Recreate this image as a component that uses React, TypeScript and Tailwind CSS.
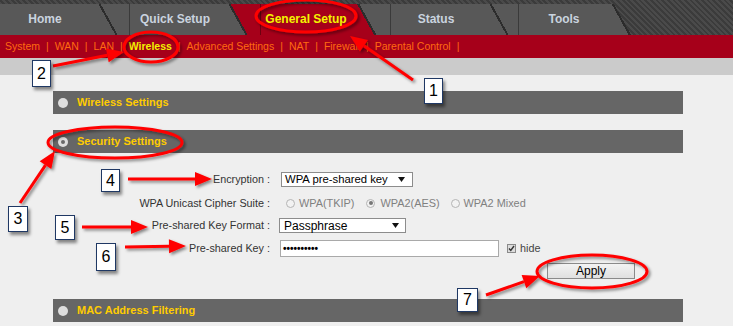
import React from 'react'

// ── Top tabs ───────────────────────────────────────────────────────────────────

const tabs = [
  {
    label: 'Home',
    cell: 'w-[129px] bg-[linear-gradient(61deg,#585858_101px,#2c2c2c_101px,#2c2c2c_103px,#585858_103px)]',
    text: 'text-[#c9d3df]',
  },
  {
    label: 'Quick Setup',
    cell: 'w-[131px] border-l border-[#3a3a3a] bg-[linear-gradient(61deg,#585858_101px,#2c2c2c_101px,#2c2c2c_103px,#a6001a_103px)]',
    text: 'text-[#c9d3df]',
  },
  {
    label: 'General Setup',
    cell: 'w-[130px] border-l border-[#6e0010] bg-[linear-gradient(61deg,#a6001a_99px,#2c2c2c_99px,#2c2c2c_101px,#585858_101px)]',
    text: 'text-[#f4f400]',
  },
  {
    label: 'Status',
    cell: 'w-[128px] border-l border-[#3a3a3a] bg-[linear-gradient(61deg,#585858_101px,#2c2c2c_101px,#2c2c2c_103px,#585858_103px)]',
    text: 'text-[#c9d3df]',
  },
  {
    label: 'Tools',
    cell: 'w-[130px] border-l border-[#3a3a3a] bg-[linear-gradient(61deg,#585858_96px,#2c2c2c_96px,#2c2c2c_98px,transparent_98px)]',
    text: 'text-[#c9d3df]',
  },
]

const navItems = ['System', 'WAN', 'LAN', 'Wireless', 'Advanced Settings', 'NAT', 'Firewall', 'Parental Control']

// ── Small form pieces ──────────────────────────────────────────────────────────

function Caret() {
  return (
    <svg width="7" height="5" viewBox="0 0 7 5" className="shrink-0">
      <path d="M0 0h7L3.5 5z" fill="#111" />
    </svg>
  )
}

function Radio({ checked }: { checked?: boolean }) {
  return (
    <span className="w-[9px] h-[9px] rounded-full border border-[#b4b4b4] bg-[#f2f2f2] flex items-center justify-center shrink-0">
      {checked && <span className="w-[4px] h-[4px] rounded-full bg-[#777]" />}
    </span>
  )
}

function SectionBar({ title, selected }: { title: string; selected?: boolean }) {
  return (
    <div className="h-[23px] w-[630px] bg-[#666666] flex items-center">
      <span className="ml-[5px] w-[10px] h-[10px] rounded-full bg-[#dedede] flex items-center justify-center">
        {selected && <span className="w-[4px] h-[4px] rounded-full bg-[#6a6a6a]" />}
      </span>
      <span className="ml-[9px] text-[11px] font-bold text-[#ffcc00]">{title}</span>
    </div>
  )
}

function Label({ children }: { children: React.ReactNode }) {
  return <span className="w-[217px] shrink-0 text-right text-[10.8px] text-[#333]">{children}</span>
}

// ── Annotation overlay ─────────────────────────────────────────────────────────

const ellipses = [
  { cx: 306, cy: 16, rx: 50, ry: 16 },
  { cx: 151, cy: 47, rx: 27, ry: 15 },
  { cx: 115, cy: 142.5, rx: 67, ry: 15.5 },
  { cx: 592, cy: 271.5, rx: 55, ry: 16.5 },
]

const arrows = [
  { x1: 413, y1: 80, x2: 350, y2: 36 },
  { x1: 53, y1: 66, x2: 124, y2: 52 },
  { x1: 20, y1: 203, x2: 55, y2: 151 },
  { x1: 128, y1: 179, x2: 212, y2: 179 },
  { x1: 82, y1: 227, x2: 148, y2: 227 },
  { x1: 125, y1: 247, x2: 186, y2: 246 },
  { x1: 486, y1: 295, x2: 540, y2: 276 },
]

function Arrow({ x1, y1, x2, y2 }: { x1: number; y1: number; x2: number; y2: number }) {
  const a = Math.atan2(y2 - y1, x2 - x1)
  const len = 17
  const half = 7
  const bx = x2 - len * Math.cos(a)
  const by = y2 - len * Math.sin(a)
  const px = -Math.sin(a) * half
  const py = Math.cos(a) * half
  return (
    <g>
      <line x1={x1} y1={y1} x2={bx} y2={by} stroke="#ff0000" strokeWidth="3" />
      <polygon points={`${x2},${y2} ${bx + px},${by + py} ${bx - px},${by - py}`} fill="#ff0000" />
    </g>
  )
}

const boxes = [
  { n: '1', cls: 'left-[424px] top-[78px] w-[19px] h-[26px]' },
  { n: '2', cls: 'left-[32px] top-[60px] w-[19px] h-[27px]' },
  { n: '3', cls: 'left-[8px] top-[206px] w-[20px] h-[26px]' },
  { n: '4', cls: 'left-[101px] top-[169px] w-[19px] h-[23px]' },
  { n: '5', cls: 'left-[55px] top-[215px] w-[20px] h-[25px]' },
  { n: '6', cls: 'left-[96px] top-[243px] w-[20px] h-[28px]' },
  { n: '7', cls: 'left-[457px] top-[288px] w-[21px] h-[24px]' },
]

// ── Page ───────────────────────────────────────────────────────────────────────

export default function App() {
  return (
    <div className="relative w-[733px] h-[326px] overflow-hidden bg-[#efefef] font-['Liberation_Sans',Arial,sans-serif]">
      {/* tab strip */}
      <div className="h-[35px] pt-[4px] flex bg-[#434343] bg-[repeating-linear-gradient(45deg,#3b3b3b_0px,#3b3b3b_2px,#4a4a4a_2px,#4a4a4a_4px)]">
        {tabs.map((t) => (
          <div key={t.label} className={`h-[31px] shrink-0 ${t.cell}`}>
            <div className={`w-[90px] h-full flex items-center justify-center pb-[2px] text-[12px] font-bold ${t.text}`}>
              {t.label}
            </div>
          </div>
        ))}
      </div>

      {/* red sub nav */}
      <div className="h-[23px] bg-[#a6001a] flex items-center pl-[5px] text-[10.5px] text-[#ff6a10]">
        {navItems.map((item) => (
          <React.Fragment key={item}>
            <span className={item === 'Wireless' ? 'font-bold text-[#f2f200]' : ''}>{item}</span>
            <span className="mx-[6px]">|</span>
          </React.Fragment>
        ))}
      </div>

      <div className="h-[17px] bg-[#cbcbcb]" />

      {/* content */}
      <div className="pl-[53px] pt-[16px] flex flex-col">
        <SectionBar title="Wireless Settings" />
        <div className="mt-[16px]">
          <SectionBar title="Security Settings" selected />
        </div>

        {/* encryption */}
        <div className="mt-[19px] h-[15px] flex items-center">
          <Label>Encryption :</Label>
          <div className="ml-[11px] w-[132px] h-[15px] border border-[#8c8c8c] bg-white flex items-center justify-between pl-[3px] pr-[7px] text-[11.3px] text-black">
            <span>WPA pre-shared key</span>
            <Caret />
          </div>
        </div>

        {/* cipher suite */}
        <div className="mt-[8px] h-[16px] flex items-center text-[10.9px]">
          <Label>WPA Unicast Cipher Suite :</Label>
          <span className="ml-[16px]"><Radio /></span>
          <span className="ml-[4px] text-[#808080]">WPA(TKIP)</span>
          <span className="ml-[12px]"><Radio checked /></span>
          <span className="ml-[5px] text-[#808080]">WPA2(AES)</span>
          <span className="ml-[11px]"><Radio /></span>
          <span className="ml-[4px] text-[#808080]">WPA2 Mixed</span>
        </div>

        {/* key format */}
        <div className="mt-[7px] h-[15px] flex items-center">
          <Label>Pre-shared Key Format :</Label>
          <div className="ml-[9px] w-[127px] h-[15px] border border-[#8c8c8c] bg-white flex items-center justify-between pl-[4px] pr-[6px] text-[12px] text-black">
            <span>Passphrase</span>
            <Caret />
          </div>
        </div>

        {/* key */}
        <div className="mt-[7px] h-[17px] flex items-center">
          <Label>Pre-shared Key :</Label>
          <div className="ml-[10px] w-[219px] h-[17px] border border-[#a9a9a9] bg-white flex items-center pl-[2px] text-[10px] leading-none font-bold text-black">
            ••••••••••
          </div>
          <span className="ml-[8px] w-[9px] h-[9px] border border-[#8a8a8a] bg-[#dcdcdc] flex items-center justify-center">
            <svg width="7" height="7" viewBox="0 0 7 7">
              <path d="M1 3.5l1.8 2L6 1" fill="none" stroke="#333" strokeWidth="1.4" />
            </svg>
          </span>
          <span className="ml-[4px] text-[10.8px] text-[#444]">hide</span>
        </div>

        {/* apply */}
        <div className="mt-[6px] h-[16px] flex items-center">
          <span className="w-[217px] shrink-0" />
          <button className="ml-[277px] w-[88px] h-[16px] border border-[#8a8a8a] bg-[linear-gradient(#f3f3f3,#e0e0e0)] text-[12px] leading-none text-black">
            Apply
          </button>
        </div>

        <div className="mt-[20px]">
          <SectionBar title="MAC Address Filtering" />
        </div>
      </div>

      {/* annotations */}
      <svg className="absolute left-0 top-0 pointer-events-none" width="733" height="326" viewBox="0 0 733 326">
        <defs>
          <filter id="sh" x="-20%" y="-20%" width="140%" height="160%">
            <feDropShadow dx="2" dy="2" stdDeviation="1.5" floodColor="#000" floodOpacity="0.45" />
          </filter>
        </defs>
        <g filter="url(#sh)">
          {ellipses.map((e, i) => (
            <ellipse key={i} cx={e.cx} cy={e.cy} rx={e.rx} ry={e.ry} fill="none" stroke="#ff0000" strokeWidth="3" />
          ))}
          {arrows.map((a, i) => (
            <Arrow key={i} {...a} />
          ))}
        </g>
      </svg>

      {boxes.map((b) => (
        <div
          key={b.n}
          className={`absolute ${b.cls} border border-[#1f3864] bg-white flex items-center justify-center text-[16px] text-black shadow-[2px_3px_3px_rgba(0,0,0,0.45)]`}
        >
          {b.n}
        </div>
      ))}
    </div>
  )
}
